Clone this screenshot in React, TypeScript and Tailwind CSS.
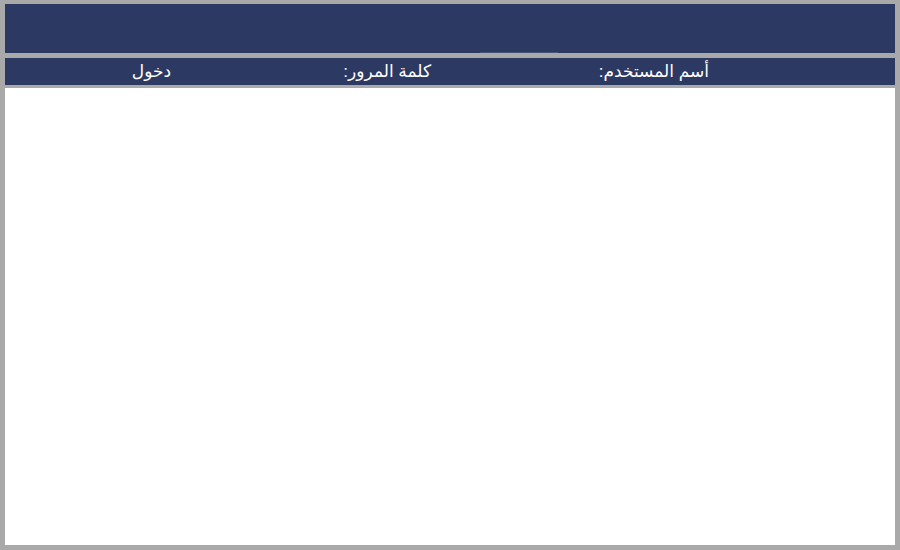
import React from "react";

export default function App() {
  return (
    <div
      className="w-[900px] h-[550px] bg-[#a9a9a9] pt-[4px] pl-[5px] pr-[5px] pb-[5px] flex flex-col"
      style={{ fontFamily: '"Liberation Sans", "DejaVu Sans", Arial, sans-serif' }}
    >
      <div className="h-[49px] bg-[#2c3962] flex items-end">
        <div className="ml-[475px] w-[78px] h-[1px] bg-[#4a5478]" />
      </div>
      <div className="mt-[5px] h-[27px] bg-[#2c3962] flex flex-row-reverse items-center pr-[186px] text-white text-[17px] leading-none" dir="ltr">
        <div dir="rtl" className="w-[278px] text-right pb-[1px]">أسم المستخدم:</div>
        <div dir="rtl" className="w-[260px] text-right pb-[1px]">كلمة المرور:</div>
        <div dir="rtl" className="text-right pb-[1px]">دخول</div>
      </div>
      <div className="mt-[3px] flex-1 bg-white" />
    </div>
  );
}
